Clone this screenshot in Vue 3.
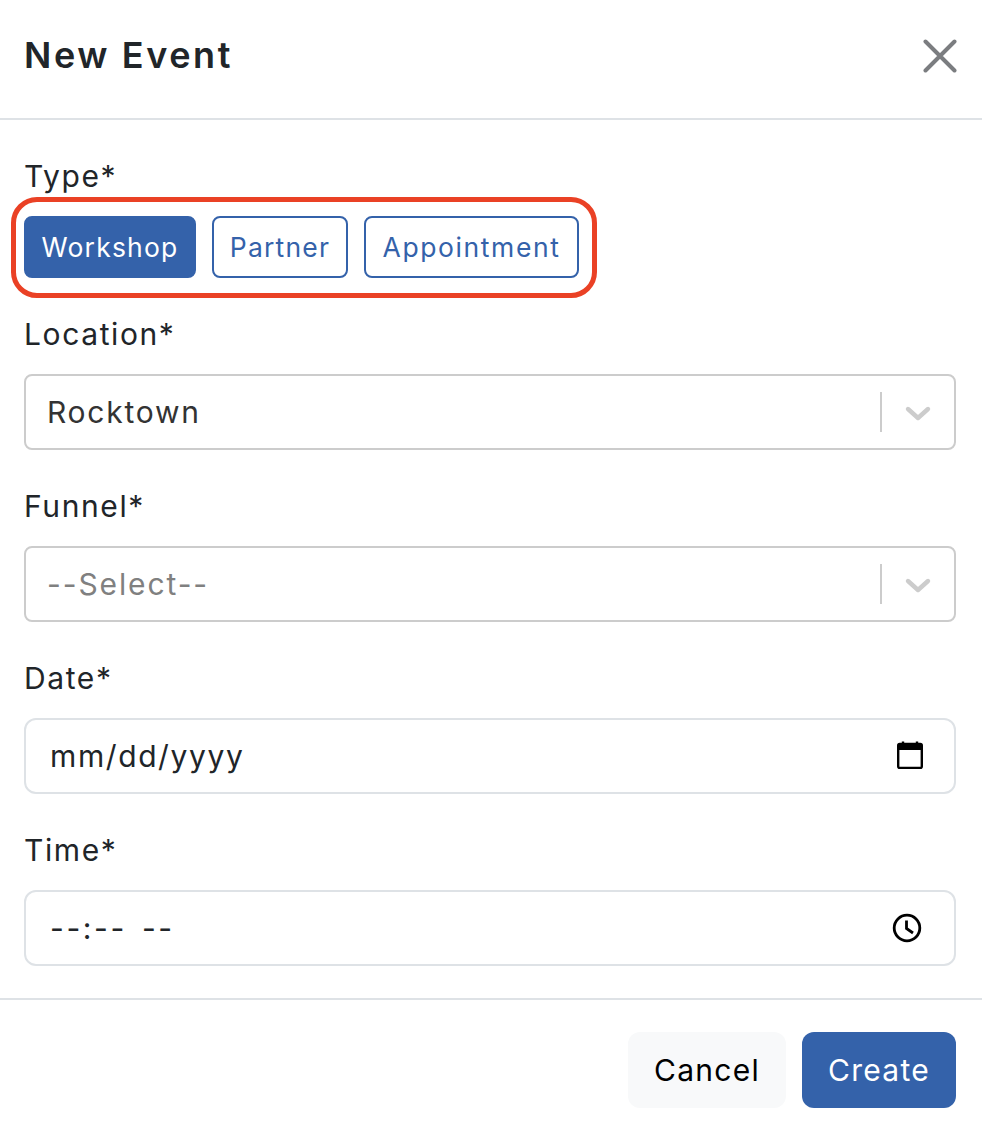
<template>
  <div class="modal">
    <header class="modal-header">
      <h1 class="modal-title">New Event</h1>
      <button class="close-btn" aria-label="Close">
        <svg width="34" height="34" viewBox="0 0 34 34">
          <path d="M2.5 2.5 L31.5 31.5 M31.5 2.5 L2.5 31.5" stroke="#7b7d80" stroke-width="4" stroke-linecap="round" fill="none" />
        </svg>
      </button>
    </header>

    <div class="modal-body">
      <div class="field">
        <label class="field-label">Type*</label>
        <div class="type-row">
          <button
            v-for="t in types"
            :key="t"
            class="type-btn"
            :class="{ active: t === selectedType }"
          >{{ t }}</button>
        </div>
      </div>

      <div class="field" v-for="s in selects" :key="s.label">
        <label class="field-label">{{ s.label }}</label>
        <div class="select-box">
          <span class="select-value" :class="{ placeholder: s.placeholder }">{{ s.value }}</span>
          <span class="select-sep"></span>
          <span class="select-arrow">
            <svg width="28" height="18" viewBox="0 0 28 18">
              <path d="M4 4 L14 13 L24 4" stroke="#cccccc" stroke-width="4.4" stroke-linecap="round" stroke-linejoin="round" fill="none" />
            </svg>
          </span>
        </div>
      </div>

      <div class="field">
        <label class="field-label">Date*</label>
        <div class="input-box">
          <span class="input-text">mm/dd/yyyy</span>
          <svg class="calendar" width="26" height="28" viewBox="0 0 26 28">
            <path d="M6 0.5 V4 M20 0.5 V4" stroke="#000" stroke-width="2.4" fill="none" />
            <rect x="1.2" y="3" width="23.6" height="24" rx="1.5" fill="none" stroke="#000" stroke-width="2.4" />
            <rect x="1.2" y="3" width="23.6" height="6" fill="#000" />
          </svg>
        </div>
      </div>

      <div class="field last">
        <label class="field-label">Time*</label>
        <div class="input-box">
          <span class="input-text time">--:-- --</span>
          <svg class="clock" width="30" height="30" viewBox="0 0 30 30">
            <circle cx="15" cy="15" r="12.8" fill="none" stroke="#000" stroke-width="2.8" />
            <path d="M14.5 7.5 V15.5 L21 20" fill="none" stroke="#000" stroke-width="2.8" />
          </svg>
        </div>
      </div>
    </div>

    <footer class="modal-footer">
      <button class="btn btn-cancel">Cancel</button>
      <button class="btn btn-create">Create</button>
    </footer>
  </div>
</template>

<script setup>
const types = ['Workshop', 'Partner', 'Appointment']
const selectedType = 'Workshop'

const selects = [
  { label: 'Location*', value: 'Rocktown' },
  { label: 'Funnel*', value: '--Select--', placeholder: true }
]
</script>

<style>
html, body {
  margin: 0;
  background: #fff;
}
</style>

<style scoped>
.modal {
  width: 982px;
  height: 1130px;
  box-sizing: border-box;
  font-family: Inter, "Liberation Sans", sans-serif;
  color: #212529;
  background: #fff;
  overflow: hidden;
}

button {
  font-family: inherit;
  cursor: pointer;
}

.modal-header {
  height: 120px;
  box-sizing: border-box;
  border-bottom: 2px solid #dee2e6;
  display: flex;
  align-items: center;
  justify-content: space-between;
  padding: 0 24px;
}

.modal-title {
  margin: 0;
  font-size: 36px;
  font-weight: 600;
  letter-spacing: 2.6px;
  line-height: 1;
  position: relative;
  top: -4px;
}

.close-btn {
  width: 36px;
  height: 36px;
  padding: 0;
  border: 0;
  background: none;
  display: flex;
  align-items: center;
  justify-content: center;
  position: relative;
  top: -3px;
}

.modal-body {
  padding: 32px 26px 32px 24px;
}

.field {
  margin-bottom: 32px;
}

.field.last {
  margin-bottom: 0;
}

.field-label {
  display: block;
  font-size: 30px;
  letter-spacing: 1.6px;
  line-height: 48px;
  margin-bottom: 16px;
}

.type-row {
  position: relative;
  display: grid;
  grid-template-columns: 172px 136px 215px;
  gap: 16px;
}

/* red annotation around the type buttons */
.type-row::after {
  content: "";
  position: absolute;
  left: -13px;
  top: -19px;
  width: 586px;
  height: 101px;
  box-sizing: border-box;
  border: 5px solid #ea4125;
  border-radius: 26px;
  pointer-events: none;
}

.type-btn {
  height: 62px;
  padding: 0;
  font-size: 26.5px;
  letter-spacing: 1.2px;
  color: #3462aa;
  background: #fff;
  border: 2px solid #3462aa;
  border-radius: 8px;
}

.type-btn:last-child {
  letter-spacing: 1.6px;
}

.type-btn.active {
  color: #fff;
  background: #3462aa;
}

.select-box {
  height: 76px;
  box-sizing: border-box;
  display: flex;
  align-items: center;
  border: 2px solid #cccccc;
  border-radius: 8px;
  padding-left: 21px;
  background: #fff;
}

.select-value {
  flex: 1;
  font-size: 30px;
  letter-spacing: 1.75px;
  color: #333;
}

.select-value.placeholder {
  color: #808080;
  letter-spacing: 1.9px;
}

.select-sep {
  width: 2px;
  height: 40px;
  background: #cccccc;
}

.select-arrow {
  width: 72px;
  display: flex;
  justify-content: center;
  padding-top: 3px;
}

.input-box {
  height: 76px;
  box-sizing: border-box;
  display: flex;
  align-items: center;
  justify-content: space-between;
  border: 2px solid #dee2e6;
  border-radius: 12px;
  padding: 0 31px 0 24px;
}

.input-text {
  font-size: 30px;
  letter-spacing: 1.6px;
  color: #212529;
}

.input-text.time {
  letter-spacing: 2.6px;
  word-spacing: 4px;
}

.calendar {
  position: relative;
  top: -1px;
}

.clock {
  margin-right: 1px;
}

.modal-footer {
  height: 132px;
  box-sizing: border-box;
  border-top: 2px solid #dee2e6;
  display: flex;
  justify-content: flex-end;
  gap: 16px;
  padding: 32px 26px 0 0;
}

.btn {
  height: 76px;
  border: 0;
  border-radius: 12px;
  font-size: 30px;
  letter-spacing: 1.25px;
}

.btn-cancel {
  width: 158px;
  background: #f8f9fa;
  color: #000;
}

.btn-create {
  width: 154px;
  background: #3462aa;
  color: #fff;
}
</style>
